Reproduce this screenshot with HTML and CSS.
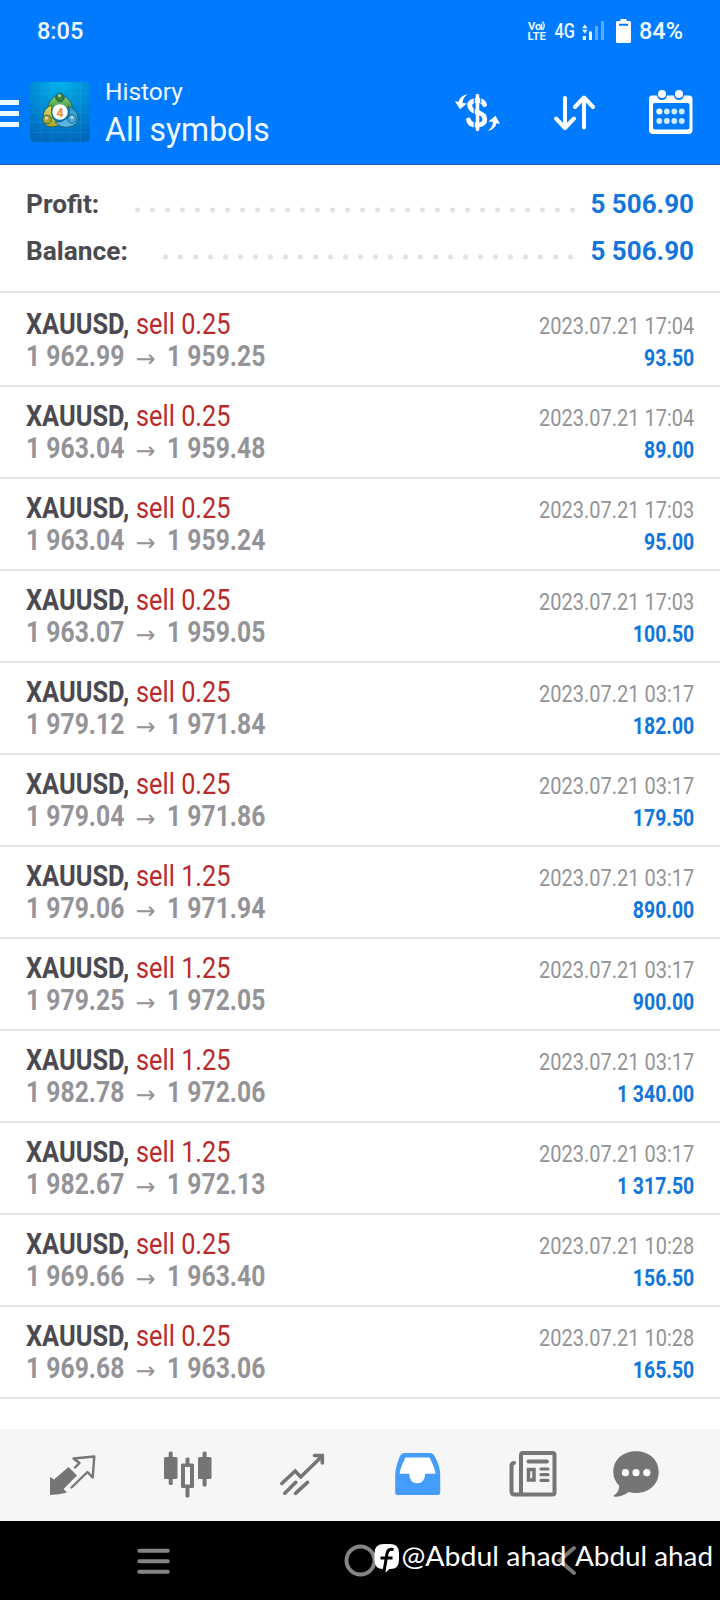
FILE: index.html
```html
<!DOCTYPE html>
<html lang="en">
<head>
<meta charset="utf-8">
<title>History</title>
<link rel="stylesheet" href="styles.css">
</head>
<body>
<div class="screen">
<header class="header">
  <div class="status">
    <span class="clock">8:05</span>
    <svg class="status-icons" viewBox="524 14 112 32" width="112" height="32">
      <g fill="#e9f6ff">
        <text class="lte" x="528" y="28.7" textLength="13.5" lengthAdjust="spacingAndGlyphs">Vo</text>
        <text class="lte" x="527.5" y="39" textLength="18.5" lengthAdjust="spacingAndGlyphs">LTE</text>
        <text class="net" x="554.5" y="37" textLength="20.5" lengthAdjust="spacingAndGlyphs">4G</text>
        <path d="M582 27.2l2.8-3.6 2.8 3.6zM582 28.8l2.8 3.6 2.8-3.6zM582.8 35h3.2v4h-3.2zM589 30.5h3v8.500h-3z"/>
        <path d="M595 25h3v14h-3zM601 20h3v19h-3z" opacity=".38"/>
      </g>
      <path d="M541 22.500q2 3 0 6.500M542.500 20.500q3.500 4 0 8.500" fill="none" stroke="#e9f6ff" stroke-width="1.300"/>
      <path fill="#fff" fill-rule="evenodd" d="M620.500 18h6v2h3q1.500 0 1.500 1.500v19q0 1.500-1.500 1.500h-12q-1.500 0-1.500-1.500v-19q0-1.500 1.500-1.500h3zM619 22.800v2h9v-2z"/>
    </svg>
    <span class="battery">84%</span>
  </div>
  <div class="toolbar">
    <div class="menu"><i></i><i></i><i></i></div>
    <svg class="logo" viewBox="0 0 60 60" width="60" height="60">
      <defs>
        <radialGradient id="bg" cx=".5" cy="0" r="1"><stop offset="0" stop-color="#00b4e8"/><stop offset=".55" stop-color="#0087d4"/><stop offset="1" stop-color="#0068bb"/></radialGradient>
        <linearGradient id="gr" x2="0" y2="1"><stop stop-color="#8ace78"/><stop offset="1" stop-color="#338d3e"/></linearGradient>
        <linearGradient id="ye" x2="0" y2="1"><stop stop-color="#e3d967"/><stop offset="1" stop-color="#aaa126"/></linearGradient>
        <linearGradient id="bl" x2="0" y2="1"><stop stop-color="#3292ce"/><stop offset="1" stop-color="#62bdf0"/></linearGradient>
      </defs>
      <rect width="60" height="60" rx="4.500" fill="url(#bg)"/>
      <path d="M0 11.500h60M0 20.500h60M0 30.500h60M0 40.500h60M0 50.500h60M11.500 0v60M21.500 0v60M40.500 0v60M50.500 0v60" stroke="#56c4ee" stroke-width=".6" opacity=".22"/>
      <g stroke="#15585a" stroke-width=".8">
        <path d="M20 31q-4-7 0-12 4-6 10-6t10 6q4 6 1 12-3-7-11-7-6 0-10 7z" fill="url(#gr)"/>
        <path d="M22 23q-9 3-9 13 0 9 9 9 6 0 10-4-8-1-10-7-1-5 0-11z" fill="url(#ye)"/>
        <path d="M25 40q5 6 13 5 10-1 10-9 0-8-10-12 3 7-1 12-5 5-12 4z" fill="url(#bl)"/>
        <circle cx="30" cy="15.500" r="4.300" fill="#347f3c"/>
        <circle cx="17" cy="37.500" r="4.300" fill="#a9a535"/>
        <circle cx="42" cy="37" r="4.300" fill="#4aa5dc"/>
      </g>
      <g fill="#fff" opacity=".55"><circle cx="29.500" cy="13.800" r="1.700"/><circle cx="16.500" cy="36" r="1.700"/><circle cx="42" cy="35.500" r="1.700"/></g>
      <circle cx="30" cy="30" r="7.700" fill="#fff"/>
      <text class="logo-num" x="30" y="34.500" text-anchor="middle">4</text>
    </svg>
    <div class="titles">
      <div class="subtitle">History</div>
      <div class="title">All symbols</div>
    </div>
    <svg class="tools" viewBox="450 84 250 56" width="250" height="56">
      <g fill="none" stroke="#fff" stroke-linecap="round" stroke-linejoin="round">
        <path stroke-width="3.600" d="M477.500 95.500V129.500"/>
        <path stroke-width="4.800" d="M484.500 104.500Q482.500 100 476.500 100.500Q469.500 101.300 469.700 105.500Q470 110 476.500 112Q485 114.200 484.800 119.500Q484.500 124.800 478 125Q470 125.500 468.500 120"/>
        <path stroke-width="4" d="M565 98v29M556 118.500l9 9.500 9-9.500M584 127.500v-29M575 107l9-9.500 9 9.500"/>
      </g>
      <path d="M474.200 96v32M480.800 96v7M480.800 106v4M480.800 116v6" stroke="#007aff" stroke-width="1.100"/>
      <path fill="#fff" d="M468 94q-5 3-5.500 9l4.500.5-7 5.800-5-8 3.700.5q1-6 9.300-7.800zM487.500 131q5-3 5.500-9l-4.500-.5 7-5.800 4.500 8-3.500-.5q-1 6-9 7.800z"/>
      <path fill="#fff" fill-rule="evenodd" d="M652 95.500h5q1 4.500 5 4.500t5-4.500h7q1 4.500 5 4.500t5-4.500h5q3.500 0 3.500 3.500v31q0 4-4 4h-35.500q-4 0-4-4v-31q0-3.500 3-3.500zM655 103q-2 0-2 2v22.500q0 2 2 2h32.500q2 0 2-2v-22.500q0-2-2-2z"/>
      <g fill="#fff"><circle cx="662" cy="94" r="4"/><circle cx="679" cy="94" r="4"/><circle cx="659.300" cy="111.500" r="3"/></g>
      <g fill="#cdeaff"><circle cx="666.800" cy="111.500" r="2.900"/><circle cx="674.300" cy="111.500" r="2.900"/><circle cx="681.800" cy="111.500" r="2.900"/><circle cx="659.300" cy="121" r="2.900"/><circle cx="666.800" cy="121" r="2.900"/><circle cx="674.300" cy="121" r="2.900"/><circle cx="681.800" cy="121" r="2.900"/></g>
    </svg>
  </div>
</header>

<section class="summary">
  <div class="sum-row"><span class="label">Profit:</span><span class="dots dots-profit"></span><span class="amount">5 506.90</span></div>
  <div class="sum-row"><span class="label">Balance:</span><span class="dots dots-balance"></span><span class="amount">5 506.90</span></div>
</section>

<main class="deals">
  <article class="deal"><div class="left"><b class="sym">XAUUSD,</b><span class="side">sell 0.25</span><b class="price">1 962.99</b><span class="arrow">→</span><b class="price">1 959.25</b></div><div class="right"><time>2023.07.21 17:04</time><b>93.50</b></div></article>
  <article class="deal"><div class="left"><b class="sym">XAUUSD,</b><span class="side">sell 0.25</span><b class="price">1 963.04</b><span class="arrow">→</span><b class="price">1 959.48</b></div><div class="right"><time>2023.07.21 17:04</time><b>89.00</b></div></article>
  <article class="deal"><div class="left"><b class="sym">XAUUSD,</b><span class="side">sell 0.25</span><b class="price">1 963.04</b><span class="arrow">→</span><b class="price">1 959.24</b></div><div class="right"><time>2023.07.21 17:03</time><b>95.00</b></div></article>
  <article class="deal"><div class="left"><b class="sym">XAUUSD,</b><span class="side">sell 0.25</span><b class="price">1 963.07</b><span class="arrow">→</span><b class="price">1 959.05</b></div><div class="right"><time>2023.07.21 17:03</time><b>100.50</b></div></article>
  <article class="deal"><div class="left"><b class="sym">XAUUSD,</b><span class="side">sell 0.25</span><b class="price">1 979.12</b><span class="arrow">→</span><b class="price">1 971.84</b></div><div class="right"><time>2023.07.21 03:17</time><b>182.00</b></div></article>
  <article class="deal"><div class="left"><b class="sym">XAUUSD,</b><span class="side">sell 0.25</span><b class="price">1 979.04</b><span class="arrow">→</span><b class="price">1 971.86</b></div><div class="right"><time>2023.07.21 03:17</time><b>179.50</b></div></article>
  <article class="deal"><div class="left"><b class="sym">XAUUSD,</b><span class="side">sell 1.25</span><b class="price">1 979.06</b><span class="arrow">→</span><b class="price">1 971.94</b></div><div class="right"><time>2023.07.21 03:17</time><b>890.00</b></div></article>
  <article class="deal"><div class="left"><b class="sym">XAUUSD,</b><span class="side">sell 1.25</span><b class="price">1 979.25</b><span class="arrow">→</span><b class="price">1 972.05</b></div><div class="right"><time>2023.07.21 03:17</time><b>900.00</b></div></article>
  <article class="deal"><div class="left"><b class="sym">XAUUSD,</b><span class="side">sell 1.25</span><b class="price">1 982.78</b><span class="arrow">→</span><b class="price">1 972.06</b></div><div class="right"><time>2023.07.21 03:17</time><b>1 340.00</b></div></article>
  <article class="deal"><div class="left"><b class="sym">XAUUSD,</b><span class="side">sell 1.25</span><b class="price">1 982.67</b><span class="arrow">→</span><b class="price">1 972.13</b></div><div class="right"><time>2023.07.21 03:17</time><b>1 317.50</b></div></article>
  <article class="deal"><div class="left"><b class="sym">XAUUSD,</b><span class="side">sell 0.25</span><b class="price">1 969.66</b><span class="arrow">→</span><b class="price">1 963.40</b></div><div class="right"><time>2023.07.21 10:28</time><b>156.50</b></div></article>
  <article class="deal"><div class="left"><b class="sym">XAUUSD,</b><span class="side">sell 0.25</span><b class="price">1 969.68</b><span class="arrow">→</span><b class="price">1 963.06</b></div><div class="right"><time>2023.07.21 10:28</time><b>165.50</b></div></article>
</main>

<nav class="tabs">
  <svg viewBox="48 1448 50 50" width="50" height="50">
    <path fill="#757575" d="M68.500 1467l8.500 8.500-13.500 13.500 3.500 3.500q-8 2-17 2.500v-18l4 2.500z"/>
    <path fill="none" stroke="#757575" stroke-width="2.400" stroke-linecap="round" stroke-linejoin="round" d="M75 1467.500l4.500-4.500-6-4.500 20.800-2-1.600 21-5.200-5.500-16 15.500"/>
  </svg>
  <svg viewBox="162 1448 50 52" width="50" height="52">
    <g fill="#757575"><rect x="164" y="1457" width="13.500" height="22" rx="1.500"/><rect x="168.700" y="1451.500" width="4" height="33.500" rx="1.500"/><rect x="198" y="1457" width="13.500" height="22" rx="1.500"/><rect x="202.600" y="1451.500" width="4" height="35" rx="1.500"/><rect x="185.500" y="1457.500" width="4" height="9" rx="1.500"/><rect x="185.500" y="1486" width="4" height="11.500" rx="1.500"/><path fill-rule="evenodd" d="M182.500 1463.500h10q1.500 0 1.500 1.500v21.500q0 1.500-1.500 1.500h-10q-1.500 0-1.500-1.500v-21.500q0-1.500 1.500-1.500zM185 1467v17.500h5v-17.500z"/></g>
  </svg>
  <svg viewBox="277 1448 50 50" width="50" height="50">
    <path fill="none" stroke="#757575" stroke-width="3.600" stroke-linecap="round" d="M281.800 1483.500l13.400-12.500 5.500 6 21-20.500M314.500 1455.500h7.800v7.500M284.800 1493.300l11-11M295.500 1493.300l12-11"/>
  </svg>
  <svg viewBox="392 1448 52 50" width="52" height="50">
    <path fill="#459dfb" d="M404 1453h26q3 0 4.500 3 5.500 10 5.700 18v18.500q0 2.500-2.500 2.500h-40q-2.500 0-2.500-2.500v-18.500q.5-8 4.800-18 1.500-3 4-3z"/>
    <path fill="#fff" d="M405.500 1457.500q-6 12-5.800 16.300h9.500q.5 9.500 8 9.500t8-9.500h10.300q0-4.500-6-16.300z"/>
  </svg>
  <svg viewBox="508 1448 50 52" width="50" height="52">
    <g fill="none" stroke="#757575" stroke-width="4" stroke-linecap="round" stroke-linejoin="round"><rect x="521" y="1453" width="33.500" height="41.500" rx="2"/><path d="M514 1463q-2.500.5-2.500 3v25q0 3.500 3 3.500h7M528.500 1461.500h18.500"/><path stroke-width="3.200" d="M541 1469h7M541 1474.700h7M541 1480.400h7"/><path stroke-linejoin="miter" stroke-width="3.500" d="M528.500 1469.500h5.500v10.500h-5.500z"/></g>
  </svg>
  <svg viewBox="611 1448 50 50" width="50" height="50">
    <path fill="#757575" d="M636 1451.300c12.500 0 22.700 8 22.700 20.700s-10.200 21-22.700 21q-4 0-7.300-1-6 4.700-14.200 4.700-2-1.200 0-1.800 4.500-2.200 4.700-9.300-5.900-5.500-5.900-13.600c0-12.700 10.200-20.700 22.700-20.700z"/>
    <g fill="#fff"><circle cx="625.400" cy="1472.700" r="3.600"/><circle cx="636" cy="1472.700" r="3.600"/><circle cx="646.800" cy="1472.700" r="3.600"/></g>
  </svg>
</nav>

<footer class="sysbar">
  <svg viewBox="0 1521 720 79" width="720" height="79">
    <g fill="none" stroke="#848484" stroke-width="4" stroke-linecap="round"><path d="M139.300 1550.800h28.500M139.300 1561.300h28.500M139.300 1571.700h28.500"/><circle cx="360.500" cy="1560.500" r="14"/><path d="M574 1548l-14.500 12.500 14.500 12.500" stroke="#777"/></g>
    <path fill="#fff" fill-rule="evenodd" d="M384 1544h6q9 0 9 9v7q0 9-8.500 9h-1l-4 3.500-1-3.500h-1.500q-8.500 0-8.500-9v-7q0-9 9.500-9z"/>
    <path fill="none" stroke="#000" stroke-width="3" d="M393.500 1549.500q-5.500-1-6.500 4l-3 18M380.500 1558h12"/>
    <g class="mark"><text x="401.500" y="1565.500" textLength="165" lengthAdjust="spacingAndGlyphs">@Abdul ahad</text><text x="575" y="1565.500" textLength="138" lengthAdjust="spacingAndGlyphs">Abdul ahad</text></g>
  </svg>
</footer>
</div>
</body>
</html>
```
FILE: styles.css
```css
* { box-sizing: border-box; }
body { margin: 0; background: #fff; font-family: Roboto, "Liberation Sans", sans-serif; }
svg { display: block; flex: none; }
.screen { width: 720px; height: 1600px; display: flex; flex-direction: column; overflow: hidden; }

.header { height: 165px; background: #007aff; border-bottom: 1px solid #1d66b4; color: #effaff; flex: none; }
.status { height: 62px; display: flex; align-items: center; padding-left: 37px; font-size: 23.5px; font-weight: 500; }
.clock { width: 487px; }
.battery { margin-left: 3px; }
.lte { font-size: 10.500px; font-weight: 700; }
.net { font-size: 21px; font-weight: 500; }
.toolbar { height: 102px; display: flex; align-items: flex-start; padding-top: 20px; }
.menu { width: 19px; margin-right: 11px; padding-top: 18px; display: flex; flex-direction: column; gap: 6px; }
.menu i { height: 5px; background: #e9fbff; }
.logo { margin-top: 0; }
.logo-num { font-size: 13px; font-weight: 700; fill: #f08a3c; }
.titles { width: 345px; margin-left: 15px; }
.subtitle { font-size: 24px; line-height: 28px; margin-top: -4px; transform: scaleX(1.02); transform-origin: left; }
.title { font-size: 33px; line-height: 40px; margin-top: 4px; transform: scaleX(.97); transform-origin: left; }
.tools { margin-top: 2px; }

.summary { height: 128px; border-bottom: 2px solid #e2e2e3; padding: 15px 26px 0; flex: none; }
.sum-row { height: 47px; display: flex; align-items: center; font-size: 26px; font-weight: 700; }
.label { width: 104px; color: #4a4a50; transform: scaleX(1.01); transform-origin: left; }
.sum-row:nth-child(2) .label { width: 132px; }
.amount { color: #1476da; margin-left: auto; }
.dots { height: 6px; margin-top: 12px; background: radial-gradient(circle at center, #e3e3e5 2.200px, transparent 2.900px) 0 0 / 15px 6px; }
.dots-profit { width: 450px; }
.dots-balance { width: 420px; }

.deals { flex: 1; }
.deal { height: 92px; border-bottom: 2px solid #e2e2e3; padding: 13px 26px 0; display: flex; justify-content: space-between; }
.deal:first-child { height: 94px; padding-top: 15px; }
.left { display: grid; grid-template-columns: 109.500px 31px 120px; grid-template-rows: 32px 32px; line-height: 32px; font-size: 29.300px; white-space: nowrap; }
.left > * { transform-origin: left; }
.sym { color: #4a4a50; transform: scaleX(.866); }
.side { color: #b92a2a; grid-column: 2 / 4; transform: scaleX(.865); }
.price { color: #949498; transform: scaleX(.843); }
.left .arrow { color: #949498; font-size: 24px; padding-top: 3px; font-family: "DejaVu Sans", sans-serif; }
.right { padding-top: 2px; line-height: 32px; font-size: 24px; text-align: right; white-space: nowrap; }
.right time, .right b { display: block; transform: scaleX(.833); transform-origin: right; }
.right time { color: #949498; }
.right b { color: #1476da; transform: scaleX(.81); }

.tabs { height: 92px; background: #f6f6f7; display: flex; padding: 19px 0 0 48px; flex: none; }
.tabs svg:nth-child(2) { margin-left: 64px; }
.tabs svg:nth-child(3), .tabs svg:nth-child(4) { margin-left: 65px; }
.tabs svg:nth-child(5) { margin-left: 64px; }
.tabs svg:nth-child(6) { margin-left: 53px; }
.sysbar { height: 79px; background: #000; flex: none; }
.mark text { font-family: Lato, sans-serif; font-size: 26px; fill: #fff; }
```
